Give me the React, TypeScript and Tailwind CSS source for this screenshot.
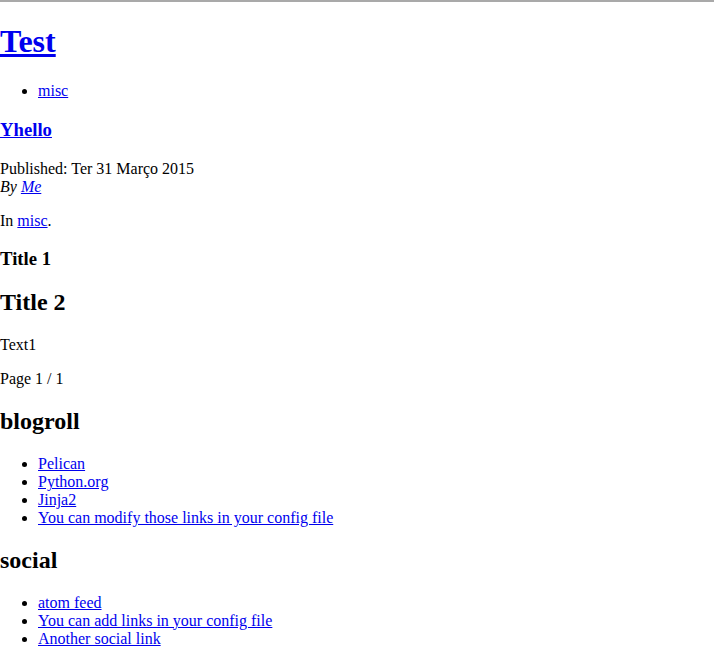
const blogroll = [
  "Pelican",
  "Python.org",
  "Jinja2",
  "You can modify those links in your config file",
];

const social = [
  "atom feed",
  "You can add links in your config file",
  "Another social link",
];

const link = "text-[#0000ee] underline";

const App = () => {
  return (
    <div className="min-h-screen bg-white text-[16px] leading-[18px] text-black font-['Liberation_Serif',serif]">
      <div className="h-[2px] bg-[#a9a9a9]" />
      <header>
        <h1 className="my-[21.44px] text-[32px] leading-[37px] font-bold">
          <a href="#" className={link}>Test</a>
        </h1>
        <nav>
          <ul className="my-4 list-disc pl-[38px]">
            <li>
              <a href="#" className={link}>misc</a>
            </li>
          </ul>
        </nav>
      </header>

      <section>
        <article>
          <h3 className="mt-[18.72px] mb-[20.5px] text-[18.72px] leading-[21px] font-bold">
            <a href="#" className={link}>Yhello</a>
          </h3>
          <footer>
            <div>Published: Ter 31 Março 2015</div>
            <address className="italic">
              By <a href="#" className={link}>Me</a>
            </address>
            <p className="my-4">
              In <a href="#" className={link}>misc</a>.
            </p>
          </footer>
          <div>
            <h3 className="mt-[18px] mb-[18.72px] text-[18.72px] leading-[21px] font-bold">Title 1</h3>
            <h2 className="my-[19.92px] text-[24px] leading-[27px] font-bold">Title 2</h2>
            <p className="my-4">Text1</p>
          </div>
        </article>
        <p className="my-4">Page 1 / 1</p>
      </section>

      <section>
        <h2 className="my-[19.92px] text-[24px] leading-[27px] font-bold">blogroll</h2>
        <ul className="my-4 list-disc pl-[38px]">
          {blogroll.map((item) => (
            <li key={item}>
              <a href="#" className={link}>{item}</a>
            </li>
          ))}
        </ul>
        <h2 className="my-[19.92px] text-[24px] leading-[27px] font-bold">social</h2>
        <ul className="my-4 list-disc pl-[38px]">
          {social.map((item) => (
            <li key={item}>
              <a href="#" className={link}>{item}</a>
            </li>
          ))}
        </ul>
      </section>
    </div>
  );
};

export default App;
